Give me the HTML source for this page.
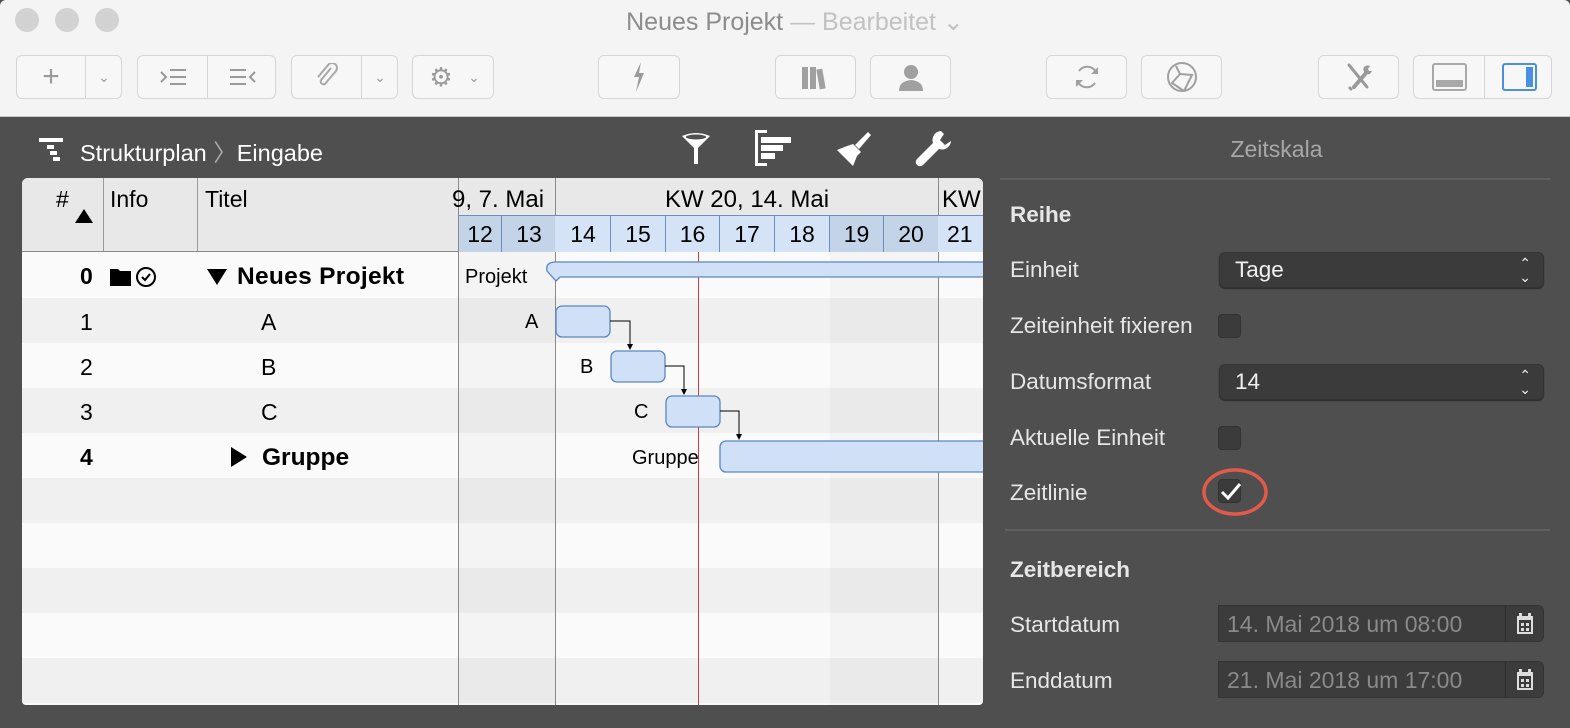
<!DOCTYPE html>
<html><head><meta charset="utf-8"><style>
*{margin:0;padding:0;box-sizing:border-box}
body{width:1570px;height:728px;overflow:hidden;background:#4f4f4f;font-family:"Liberation Sans",sans-serif;position:relative}
.abs{position:absolute}
.top{left:0;top:0;width:1570px;height:117px;background:#f4f4f4;border-bottom:1px solid #c8c8c8;border-radius:6px 6px 0 0}
.tl{width:24px;height:24px;border-radius:50%;background:#d2d2d2;top:8px}
.btn{top:55px;height:44px;border:1px solid #d6d6d6;border-radius:6px;background:#f7f7f7}
.div{position:absolute;top:0;bottom:0;width:1px;background:#d6d6d6}
.ic{position:absolute;top:0;height:42px;display:flex;align-items:center;justify-content:center;color:#9a9a9a}
.tbl{left:22px;top:178px;width:961px;height:527px;background:#fafafa;border-radius:6px 6px 4px 4px;overflow:hidden}
.row{position:absolute;left:0;width:961px;height:45px}
.t{position:absolute;font-size:23px;color:#000;line-height:45px;white-space:nowrap}
.lbl{position:absolute;left:1010px;color:#e6e6e6;font-size:22.5px;white-space:nowrap}
.pop{position:absolute;left:1219px;width:325px;height:36px;background:#3b3b3b;border-radius:6px;border:1px solid #333;box-shadow:0 1px 1px #2a2a2a;color:#f0f0f0;font-size:22.5px;line-height:34px;padding-left:15px}
.cb{position:absolute;left:1218px;width:23px;height:24px;background:#3b3b3b;border:1px solid #333;border-radius:4px}
.fld{position:absolute;left:1218px;width:326px;height:37px;background:#3c3c3c;border:1px solid #333;border-radius:0 6px 6px 0;color:#8a8a8a;font-size:23px;line-height:36px;padding-left:8px;white-space:nowrap}
</style></head><body>
<div class="abs top"></div>
<div class="abs tl" style="left:15px"></div>
<div class="abs tl" style="left:55px"></div>
<div class="abs tl" style="left:95px"></div>
<div class="abs" style="left:0;width:1570px;top:7px;text-align:center;font-size:25px;color:#8c8c8c;padding-left:20px">Neues Projekt <span style="color:#c2c2c2">— Bearbeitet ⌄</span></div>

<div class="abs btn" style="left:16px;width:106px"><div class="div" style="left:68px"></div>
<div class="ic" style="left:0;width:68px;font-size:30px">+</div><div class="ic" style="left:69px;width:36px;font-size:14px">&#8964;</div></div>
<div class="abs btn" style="left:137px;width:139px"><div class="div" style="left:69px"></div>
<div class="ic" style="left:0;width:69px"><svg width="28" height="20"><g stroke="#9a9a9a" stroke-width="2" fill="none"><path d="M2 5l5 5-5 5"/><path d="M11 3h16M11 10h16M11 17h16"/></g></svg></div>
<div class="ic" style="left:70px;width:69px"><svg width="28" height="20"><g stroke="#9a9a9a" stroke-width="2" fill="none"><path d="M26 5l-5 5 5 5"/><path d="M1 3h16M1 10h16M1 17h16"/></g></svg></div></div>
<div class="abs btn" style="left:291px;width:107px"><div class="div" style="left:69px"></div>
<div class="ic" style="left:0;width:69px"><svg width="24" height="28"><path d="M16 5l-10 12a3 3 0 0 0 4 4l11-13a5 5 0 0 0-7-7L3 14" stroke="#a8a8a8" stroke-width="2" fill="none"/></svg></div><div class="ic" style="left:70px;width:36px;font-size:14px">&#8964;</div></div>
<div class="abs btn" style="left:412px;width:82px"><div class="ic" style="left:8px;width:40px;font-size:26px">&#9881;</div><div class="ic" style="left:48px;width:26px;font-size:14px">&#8964;</div></div>
<div class="abs btn" style="left:598px;width:82px"><div class="ic" style="left:0;width:80px"><svg width="14" height="30"><path d="M9 0L2 15h5L4 30 12 11H7z" fill="#9a9a9a"/></svg></div></div>
<div class="abs btn" style="left:775px;width:81px"><div class="ic" style="left:0;width:80px"><svg width="30" height="26"><g fill="#a0a0a0"><rect x="1" y="3" width="6" height="22"/><rect x="9" y="3" width="6" height="22"/><rect x="17" y="5" width="6" height="20" transform="rotate(-10 20 15)"/></g></svg></div></div>
<div class="abs btn" style="left:870px;width:81px"><div class="ic" style="left:0;width:80px"><svg width="28" height="28"><circle cx="14" cy="9" r="7" fill="#a0a0a0"/><path d="M2 28q0-10 12-11q12 1 12 11z" fill="#a0a0a0"/></svg></div></div>
<div class="abs btn" style="left:1046px;width:81px"><div class="ic" style="left:0;width:80px"><svg width="30" height="30"><g stroke="#a0a0a0" stroke-width="2" fill="none"><path d="M7 9a10 10 0 0 1 17 1"/><path d="M23 21a10 10 0 0 1-17-1"/></g><path d="M26 5v7h-7z M4 25v-7h7z" fill="#a0a0a0"/></svg></div></div>
<div class="abs btn" style="left:1141px;width:81px"><div class="ic" style="left:0;width:80px"><svg width="32" height="32"><g stroke="#a0a0a0" stroke-width="2" fill="none"><circle cx="16" cy="16" r="14"/><path d="M10 5l4 8-8 9 12 8M14 13l12 1-8 16"/></g></svg></div></div>
<div class="abs btn" style="left:1318px;width:81px"><div class="ic" style="left:0;width:80px"><svg width="30" height="32"><g stroke="#9a9a9a" stroke-linecap="round"><path d="M5 4l18 22" stroke-width="3"/><path d="M10 26L22 12" stroke-width="4"/></g><path d="M20 6a5 5 0 0 0 6 7l2-3-3 0-1-2 2-3a5 5 0 0 0-6 1z" fill="#9a9a9a"/><path d="M4 27l3 3 2-2-3-3z" fill="#9a9a9a"/></svg></div></div>
<div class="abs btn" style="left:1413px;width:139px"><div class="div" style="left:70px"></div>
<div class="ic" style="left:0;width:70px"><div style="width:35px;height:28px;border:2px solid #a8a8a8;border-radius:3px;position:relative"><div style="position:absolute;left:2px;right:2px;bottom:2px;height:7px;background:#a8a8a8"></div></div></div>
<div class="ic" style="left:71px;width:68px"><div style="width:35px;height:28px;border:2px solid #4a90e2;border-radius:3px;position:relative"><div style="position:absolute;top:2px;bottom:2px;right:2px;width:7px;background:#4a90e2"></div></div></div></div>

<!-- dark header -->
<svg class="abs" style="left:38px;top:136px" width="28" height="26"><g fill="#fff"><rect x="1" y="2" width="24" height="4"/><rect x="9" y="9" width="7" height="4"/><rect x="12" y="15" width="7" height="4"/><rect x="15" y="21" width="7" height="4"/></g></svg>
<div class="abs" style="left:80px;top:134px;color:#fff;font-size:23.5px;white-space:nowrap">Strukturplan <span style="color:#aaa">〉</span>Eingabe</div>
<svg class="abs" style="left:680px;top:132px" width="32" height="34"><path d="M2 4q14-6 28 0l-12 12v16l-4 0v-16z" fill="#fff"/><ellipse cx="16" cy="5" rx="10" ry="2.5" fill="#4f4f4f"/></svg>
<svg class="abs" style="left:755px;top:130px" width="40" height="36"><g fill="#fff"><rect x="0" y="0" width="3" height="36"/><rect x="0" y="0" width="12" height="3"/><rect x="0" y="33" width="12" height="3"/><rect x="6" y="7" width="30" height="6"/><rect x="6" y="15" width="22" height="6"/><rect x="6" y="23" width="14" height="6"/></g></svg>
<svg class="abs" style="left:835px;top:130px" width="40" height="38"><path d="M33 2l3 3-12 14-4-4z" fill="#fff"/><path d="M18 14l8 8-4 4-4 10-16-16 10-4z" fill="#fff"/></svg>
<svg class="abs" style="left:913px;top:129px" width="40" height="40"><path d="M28 2a9 9 0 0 0-8 12L4 30a4 4 0 0 0 6 6l16-16a9 9 0 0 0 12-8l-6 4-5-5 4-6z" fill="#fff"/></svg>
<div class="abs" style="left:983px;width:587px;top:136px;text-align:center;color:#a8a8a8;font-size:23px">Zeitskala</div>

<!-- table -->
<div class="abs tbl">
  <div class="abs" style="left:0;top:0;width:961px;height:74px;background:#e8e8e8;border-bottom:1px solid #8a8a8a"></div>
  <div class="row" style="top:74px;background:#fafafa"></div>
  <div class="row" style="top:120px;background:#f0f0f0"></div>
  <div class="row" style="top:165px;background:#fafafa"></div>
  <div class="row" style="top:210px;background:#f0f0f0"></div>
  <div class="row" style="top:255px;background:#fafafa"></div>
  <div class="row" style="top:300px;background:#f0f0f0"></div>
  <div class="row" style="top:345px;background:#fafafa"></div>
  <div class="row" style="top:390px;background:#f0f0f0"></div>
  <div class="row" style="top:435px;background:#fafafa"></div>
  <div class="row" style="top:480px;background:#f0f0f0"></div>
  <div class="abs" style="left:437px;top:74px;width:97px;height:453px;background:rgba(0,0,0,.025)"></div>
  <div class="abs" style="left:808px;top:74px;width:108px;height:453px;background:rgba(0,0,0,.025)"></div>
  <div class="abs" style="left:81px;top:0;width:1px;height:74px;background:#9a9a9a"></div>
  <div class="abs" style="left:175px;top:0;width:1px;height:74px;background:#9a9a9a"></div>
  <div class="abs" style="left:436px;top:0;width:1px;height:527px;background:#8a8a8a"></div>
  <div class="abs" style="left:533px;top:0;width:1px;height:527px;background:#8a8a8a"></div>
  <div class="abs" style="left:916px;top:0;width:1px;height:527px;background:#8a8a8a"></div>
  <div class="abs" style="left:676px;top:74px;width:1px;height:453px;background:#c84040"></div>
  <div class="t" style="left:34px;top:-1px">#</div>
  <svg class="abs" style="left:52px;top:30px" width="20" height="16"><path d="M10 1L19 15H1z" fill="#000"/></svg>
  <div class="t" style="left:88px;top:-1px">Info</div>
  <div class="t" style="left:183px;top:-1px">Titel</div>
  <div class="t" style="left:430px;top:-1px;width:104px;overflow:hidden;direction:rtl;text-align:left;font-size:24px"><span style="direction:ltr;unicode-bidi:embed">9, 7. Mai&nbsp;</span></div>
  <div class="t" style="left:534px;top:-1px;width:382px;text-align:center;font-size:24px">KW 20, 14. Mai</div>
  <div class="t" style="left:920px;top:-1px;font-size:24px">KW</div>
  <div class="abs" style="left:437px;top:37px;width:524px;height:37px;background:#d5e3f6;border-top:1px solid #6a8fc0"></div>
  <div class="abs" style="left:437px;top:38px;width:96px;height:36px;background:#c3d3e8"></div>
  <div class="abs" style="left:807px;top:38px;width:109px;height:36px;background:#c3d3e8"></div>
  <div class="t" style="left:58px;top:76px;font-weight:bold">0</div>
  <svg class="abs" style="left:87px;top:88px" width="52" height="22"><path d="M1 3h8l2 2h11v15H1z" fill="#000"/><circle cx="37" cy="11" r="9" stroke="#000" stroke-width="2" fill="none"/><path d="M33 11l3 3 5-6" stroke="#000" stroke-width="2" fill="none"/></svg>
  <svg class="abs" style="left:184px;top:90px" width="22" height="18"><path d="M1 1h20L11 17z" fill="#000"/></svg>
  <div class="t" style="left:215px;top:76px;font-weight:bold;font-size:24.5px;letter-spacing:.3px">Neues Projekt</div>
  <div class="t" style="left:58px;top:122px">1</div><div class="t" style="left:239px;top:122px">A</div>
  <div class="t" style="left:58px;top:167px">2</div><div class="t" style="left:239px;top:167px">B</div>
  <div class="t" style="left:58px;top:212px">3</div><div class="t" style="left:239px;top:212px">C</div>
  <div class="t" style="left:58px;top:257px;font-weight:bold">4</div>
  <svg class="abs" style="left:208px;top:268px" width="18" height="22"><path d="M1 1v20l16-10z" fill="#000"/></svg>
  <div class="t" style="left:240px;top:257px;font-weight:bold;font-size:24.5px">Gruppe</div>
  <div class="t" style="left:443px;top:77px;font-size:20px">Projekt</div>
  <div class="t" style="left:503px;top:122px;font-size:20px">A</div>
  <div class="t" style="left:558px;top:167px;font-size:20px">B</div>
  <div class="t" style="left:612px;top:212px;font-size:20px">C</div>
  <div class="t" style="left:610px;top:258px;font-size:20px">Gruppe</div>
  <svg class="abs" style="left:520px;top:80px" width="441" height="300">
    <path d="M14 4H445V19H18L14 23L5 13Q3 4 14 4z" fill="#cfe0f7" stroke="#5a86c2" stroke-width="1.3"/>
    <g fill="#cfe0f7" stroke="#5a86c2" stroke-width="1.3">
      <rect x="14" y="48" width="54" height="31" rx="6"/>
      <rect x="69" y="93" width="54" height="31" rx="6"/>
      <rect x="124" y="138" width="54" height="31" rx="6"/>
      <rect x="178" y="183" width="270" height="31" rx="6"/>
    </g>
    <g stroke="#000" stroke-width="1" fill="none"><path d="M68 63h20v24M123 108h19v24M178 153h19v24"/></g>
    <g fill="#000"><path d="M85 86h6l-3 6z M139 131h6l-3 6z M194 176h6l-3 6z"/></g>
  </svg>
</div>

<!-- right panel -->
<div class="abs" style="left:1000px;top:178px;width:550px;height:2px;background:#5f5f5f"></div>
<div class="lbl" style="top:202px;font-weight:bold">Reihe</div>
<div class="lbl" style="top:257px">Einheit</div>
<div class="pop" style="top:252px">Tage<span style="position:absolute;right:12px;top:0;font-size:14px;line-height:14px;padding-top:3px;text-align:center">&#8963;<br>&#8964;</span></div>
<div class="lbl" style="top:313px">Zeiteinheit fixieren</div>
<div class="cb" style="top:314px"></div>
<div class="lbl" style="top:369px">Datumsformat</div>
<div class="pop" style="top:364px">14<span style="position:absolute;right:12px;top:0;font-size:14px;line-height:14px;padding-top:3px;text-align:center">&#8963;<br>&#8964;</span></div>
<div class="lbl" style="top:425px">Aktuelle Einheit</div>
<div class="cb" style="top:426px"></div>
<div class="lbl" style="top:480px">Zeitlinie</div>
<div class="cb" style="top:479px"></div>
<svg class="abs" style="left:1198px;top:464px" width="76" height="56"><path d="M24 28l6 6 12-14" stroke="#fff" stroke-width="3" fill="none"/><ellipse cx="37" cy="28" rx="31" ry="22" stroke="#e25a4a" stroke-width="3.5" fill="none"/></svg>
<div class="abs" style="left:1005px;top:529px;width:545px;height:2px;background:#606060"></div>
<div class="lbl" style="top:557px;font-weight:bold">Zeitbereich</div>
<div class="lbl" style="top:612px">Startdatum</div>
<div class="fld" style="top:605px">14. Mai 2018 um 08:00</div>
<div class="lbl" style="top:668px">Enddatum</div>
<div class="fld" style="top:661px">21. Mai 2018 um 17:00</div>
<div class="abs" style="left:1505px;top:606px;width:1px;height:36px;background:#2e2e2e"></div>
<div class="abs" style="left:1505px;top:662px;width:1px;height:36px;background:#2e2e2e"></div>
<svg class="abs" style="left:1515px;top:612px" width="20" height="24"><g fill="#ddd"><rect x="2" y="4" width="16" height="4"/><rect x="4" y="1" width="3" height="4"/><rect x="13" y="1" width="3" height="4"/></g><rect x="3" y="7" width="14" height="14" fill="none" stroke="#ddd" stroke-width="2"/><g fill="#ddd"><rect x="6" y="11" width="3" height="3"/><rect x="11" y="11" width="3" height="3"/><rect x="6" y="16" width="3" height="3"/><rect x="11" y="16" width="3" height="3"/></g></svg>
<svg class="abs" style="left:1515px;top:668px" width="20" height="24"><g fill="#ddd"><rect x="2" y="4" width="16" height="4"/><rect x="4" y="1" width="3" height="4"/><rect x="13" y="1" width="3" height="4"/></g><rect x="3" y="7" width="14" height="14" fill="none" stroke="#ddd" stroke-width="2"/><g fill="#ddd"><rect x="6" y="11" width="3" height="3"/><rect x="11" y="11" width="3" height="3"/><rect x="6" y="16" width="3" height="3"/><rect x="11" y="16" width="3" height="3"/></g></svg>

<div class="abs" style="left:459px;top:215px;width:524px;height:37px;font-size:23px;line-height:39px;color:#000">
<span class="abs" style="left:0;width:43px;text-align:center;border-right:1px solid #6a8fc0;height:37px">12</span>
<span class="abs" style="left:43px;width:54px;text-align:center;height:37px">13</span>
<span class="abs" style="left:97px;width:55px;text-align:center;border-right:1px solid #6a8fc0;height:37px">14</span>
<span class="abs" style="left:152px;width:55px;text-align:center;border-right:1px solid #6a8fc0;height:37px">15</span>
<span class="abs" style="left:207px;width:54px;text-align:center;border-right:1px solid #6a8fc0;height:37px">16</span>
<span class="abs" style="left:261px;width:55px;text-align:center;border-right:1px solid #6a8fc0;height:37px">17</span>
<span class="abs" style="left:316px;width:55px;text-align:center;border-right:1px solid #6a8fc0;height:37px">18</span>
<span class="abs" style="left:371px;width:54px;text-align:center;border-right:1px solid #6a8fc0;height:37px">19</span>
<span class="abs" style="left:425px;width:54px;text-align:center;height:37px">20</span>
<span class="abs" style="left:488px;height:37px">21</span>
</div>
</body></html>
